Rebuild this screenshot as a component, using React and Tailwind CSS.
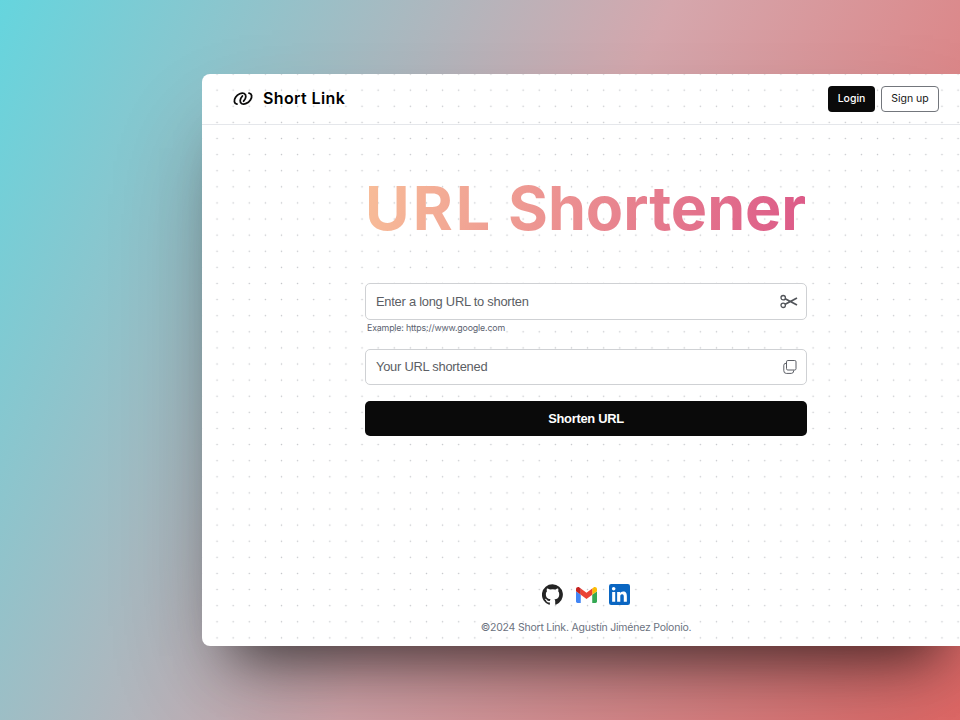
import React from "react";

function LinkLogo() {
  return (
    <svg className="h-[20px] w-[20px]" viewBox="0 0 20 20" fill="none" stroke="#0a0a0a" strokeWidth="1.8" strokeLinecap="round">
      <path d="M4 15.1A6.7 4.3 -42 1 1 10.6 12.2" />
      <path d="M16 4.1A6.7 4.3 -42 1 1 9.4 7" />
    </svg>
  );
}

function Scissors() {
  return (
    <svg className="h-[18px] w-[18px]" viewBox="0 0 18 18" fill="none" stroke="#52555a" strokeWidth="1.3">
      <circle cx="3.2" cy="4.7" r="2.2" />
      <circle cx="3.2" cy="12.3" r="2.2" />
      <path d="M5.2 5.7 17 12M5.2 11.3 17 5" strokeWidth="1.7" />
    </svg>
  );
}

function CopyIcon() {
  return (
    <svg className="h-[14px] w-[14px]" viewBox="0 0 14 14" fill="none" stroke="#5c5f66" strokeWidth="1">
      <rect x="3.5" y="0.5" width="9.5" height="9.5" rx="1.3" />
      <path d="M3.5 3.2Q.8 3.2.8 5.2v5.5Q.8 13.4 3.3 13.4h5q2.5 0 2.5-3.1" />
    </svg>
  );
}

function Github() {
  return (
    <svg className="h-[21px] w-[21px]" viewBox="0 0 24 24" fill="#242424">
      <path d="M12 .3a12 12 0 0 0-3.8 23.4c.6.1.8-.3.8-.6v-2.1c-3.3.7-4-1.6-4-1.6-.6-1.4-1.4-1.8-1.4-1.8-1-.7.1-.7.1-.7 1.2.1 1.9 1.2 1.9 1.2 1 1.8 2.8 1.3 3.5 1 .1-.8.4-1.3.8-1.6-2.7-.3-5.5-1.3-5.5-6 0-1.2.5-2.3 1.3-3.1-.2-.4-.6-1.6 0-3.2 0 0 1-.3 3.4 1.2a11.5 11.5 0 0 1 6 0c2.3-1.5 3.3-1.2 3.3-1.2.6 1.6.2 2.8.1 3.2.8.8 1.2 1.9 1.2 3.2 0 4.6-2.8 5.6-5.5 5.9.5.4.9 1.1.9 2.2v3.3c0 .3.2.7.8.6A12 12 0 0 0 12 .3" />
    </svg>
  );
}

function Gmail() {
  return (
    <svg className="h-[16px] w-[21px]" viewBox="52 42 88 66">
      <path fill="#4285f4" d="M58 108h14V74L52 59v43c0 3.32 2.69 6 6 6" />
      <path fill="#34a853" d="M120 108h14c3.32 0 6-2.69 6-6V59l-20 15" />
      <path fill="#fbbc04" d="M120 48v26l20-15v-8c0-7.42-8.47-11.65-14.4-7.2" />
      <path fill="#ea4335" d="M72 74V48l24 18 24-18v26L96 92" />
      <path fill="#c5221f" d="M52 51v8l20 15V48l-5.6-4.2c-5.94-4.45-14.4-.22-14.4 7.2" />
    </svg>
  );
}

function Linkedin() {
  return (
    <svg className="h-[21px] w-[21px]" viewBox="0 0 24 24">
      <rect width="24" height="24" rx="2.5" fill="#0a66c2" />
      <path fill="#fff" d="M3.6 9h3.5v11.4H3.6zM9.3 9h3.4v1.6c.5-.9 1.7-1.9 3.4-1.9 3.6 0 4.3 2.4 4.3 5.4v6.3h-3.5v-5.6c0-1.3 0-3-1.9-3s-2.1 1.4-2.1 2.9v5.7H9.3z" />
      <circle cx="5.35" cy="5.4" r="2.05" fill="#fff" />
    </svg>
  );
}

export default function App() {
  return (
    <div className="h-[720px] w-[960px] overflow-hidden bg-[linear-gradient(115deg,#65d5de_0%,#d5a7ad_52%,#e26967_100%)] pt-[74px] pl-[202px] font-[Inter,sans-serif]">
      <div className="flex h-[572px] w-[768px] flex-col rounded-[8px] bg-white bg-[radial-gradient(circle_at_center,#c2c4c8_0.7px,transparent_1px)] bg-[length:16.11px_16.11px] bg-[position:7px_-8px] shadow-[0_42px_50px_-32px_rgba(0,0,0,0.55),0_50px_100px_-20px_rgba(0,0,0,0.3)]">
        <header className="flex h-[51px] shrink-0 items-center border-b border-[#e5e7eb] pr-[31px] pl-[31px]">
          <LinkLogo />
          <span className="mb-[2px] ml-[10px] text-[16px] font-semibold tracking-[0.38px] whitespace-nowrap text-black">Short Link</span>
          <nav className="ml-auto flex gap-[6px] text-[10.5px]">
            <button className="h-[26px] w-[47px] rounded-[4px] bg-[#0a0a0a] font-medium text-white">Login</button>
            <button className="h-[26px] w-[58px] rounded-[4px] border border-[#73767c] bg-white whitespace-nowrap text-[#171717]">Sign up</button>
          </nav>
        </header>
        <main className="ml-[163px] flex w-[442px] flex-1 flex-col self-start">
          <h1 className="mt-[47px] flex h-[72px] w-[442px] bg-[linear-gradient(100deg,#f8bd98,#dc5988)] bg-clip-text text-[61px] leading-[72px] font-bold whitespace-nowrap text-transparent">
            <span className="w-[143px] shrink-0 tracking-[3px]">URL </span>
            <span className="tracking-[-0.05px]">Shortener</span>
          </h1>
          <div className="mt-[39px] flex h-[37px] items-center justify-between rounded-[5px] border border-[#cfd1d4] bg-white pr-[8px] pl-[10px] font-['Liberation_Sans',sans-serif] text-[12.9px] text-[#5b5e64]">
            <span className="tracking-[-0.25px]">Enter a long URL to shorten</span>
            <Scissors />
          </div>
          <p className="mt-[2px] h-[12px] pl-[2px] text-[8.8px] leading-[12px] tracking-[-0.15px] text-[#5b6270]">Example: https://www.google.com</p>
          <div className="mt-[15px] flex h-[36px] items-center justify-between rounded-[5px] border border-[#cfd1d4] bg-white pr-[9px] pl-[10px] font-['Liberation_Sans',sans-serif] text-[12.9px] text-[#5b5e64]">
            <span className="tracking-[-0.25px]">Your URL shortened</span>
            <CopyIcon />
          </div>
          <button className="mt-[16px] h-[35px] rounded-[5px] bg-[#0a0a0a] font-['Liberation_Sans',sans-serif] text-[12.9px] font-bold tracking-[-0.3px] text-white">Shorten URL</button>
        </main>
        <footer className="flex h-[62px] shrink-0 flex-col items-center">
          <div className="flex h-[21px] items-center gap-[12.5px]">
            <Github />
            <Gmail />
            <Linkedin />
          </div>
          <p className="mt-[15px] text-[10.5px] leading-[16px] tracking-[-0.22px] text-[#6b7280]">©2024 Short Link. Agustín Jiménez Polonio.</p>
        </footer>
      </div>
    </div>
  );
}
